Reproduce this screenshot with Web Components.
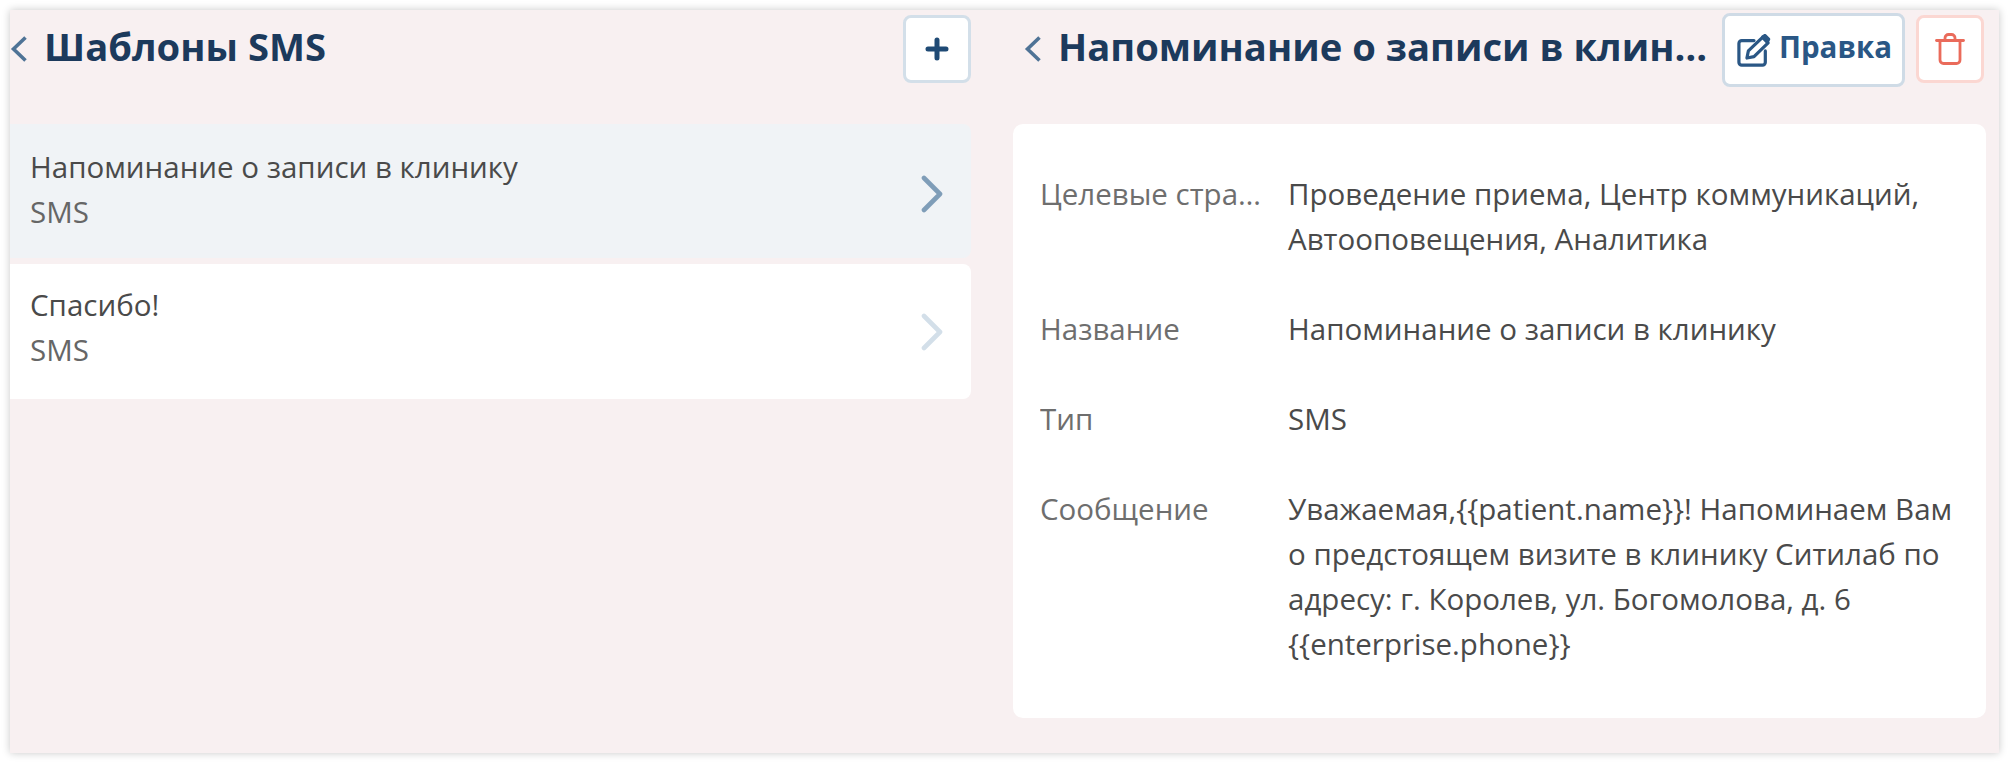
<!doctype html>
<html>
<head>
<meta charset="utf-8">
<title>Шаблоны SMS</title>
<style>
  html, body { margin: 0; height: 100%; background: #fff; }
  body { padding: 10px; box-sizing: border-box; font-family: "Open Sans", "Noto Sans", sans-serif; font-size: 29.5px; line-height: 45px; color: #4a4a4a; }
</style>
</head>
<body>
<sms-templates>
  <sms-column slot="list">
    <sms-header slot="head" text="Шаблоны SMS">
      <sms-button kind="plus"></sms-button>
    </sms-header>
    <sms-item selected title-text="Напоминание о записи в клинику" sub="SMS" style="--pt:20px"></sms-item>
    <sms-item title-text="Спасибо!" sub="SMS" style="--pt:18px;--pb:27px"></sms-item>
  </sms-column>
  <sms-column slot="detail">
    <sms-header slot="head" text="Напоминание о записи в клинику" style="--pl:11px">
      <sms-button kind="edit">Правка</sms-button>
      <sms-button kind="trash"></sms-button>
    </sms-header>
    <sms-card>
      <sms-row label="Целевые страницы">Проведение приема, Центр коммуникаций, Автооповещения, Аналитика</sms-row>
      <sms-row label="Название">Напоминание о записи в клинику</sms-row>
      <sms-row label="Тип">SMS</sms-row>
      <sms-row label="Сообщение">Уважаемая,{{patient.name}}! Напоминаем Вам о предстоящем визите в клинику Ситилаб по адресу: г. Королев, ул. Богомолова, д. 6 {{enterprise.phone}}</sms-row>
    </sms-card>
  </sms-column>
</sms-templates>
<script>
  function define(name, html, extra) {
    customElements.define(name, class extends HTMLElement {
      constructor() {
        super();
        this.attachShadow({mode: 'open'}).innerHTML = html;
      }
      connectedCallback() {
        if (extra) extra(this, this.shadowRoot);
      }
    });
  }

  define('sms-templates', `
    <style>
      :host { display: flex; height: 743px; background: #f8f0f1; box-shadow: 0 0 8px rgba(0,0,0,.22); }
      .l { display: block; width: 961px; flex: none; }
      .r { display: block; flex: 1; min-width: 0; padding: 0 13px 0 42px; }
    </style>
    <div class="l"><slot name="list"></slot></div>
    <div class="r"><slot name="detail"></slot></div>`);

  define('sms-column', `
    <style>
      :host { display: block; }
      .items { display: flex; flex-direction: column; gap: 6px; }
    </style>
    <slot name="head"></slot>
    <div class="items"><slot></slot></div>`);

  define('sms-header', `
    <style>
      :host { display: flex; align-items: flex-start; height: 114px; box-sizing: border-box; padding-left: var(--pl, 0); }
      svg { width: 18px; height: 28px; flex: none; margin: 25px 16px 0 0; }
      h1 { flex: 1; min-width: 0; margin: 0; font-size: 38.2px; line-height: 50px; padding-top: 11px; font-weight: 700; color: #1c3a5c;
           white-space: nowrap; overflow: hidden; text-overflow: ellipsis; }
      .acts { display: flex; align-items: flex-start; gap: 11px; padding-left: 10px; }
    </style>
    <svg viewBox="0 0 18 28" fill="none" stroke="#4f7396" stroke-width="3.6"><path d="M15.5 2.5 3.5 14l12 11.5"/></svg>
    <h1></h1>
    <div class="acts"><slot></slot></div>`,
    (el, root) => { root.querySelector('h1').textContent = el.getAttribute('text'); });

  const icons = {
    plus: '<svg width="24" height="24" viewBox="0 0 24 24" stroke="#1f4a75" stroke-width="5" stroke-linecap="round" fill="none"><path d="M12 3v18M3 12h18"/></svg>',
    edit: '<svg width="34" height="33" viewBox="0 0 36 35" fill="none" stroke="#2a5785" stroke-width="3.4" stroke-linejoin="round" stroke-linecap="round"><path d="M18 7H5a3 3 0 0 0-3 3v20a3 3 0 0 0 3 3h22a3 3 0 0 0 3-3V18"/><path d="M12 18 27 3.5l6 6L18 24l-7.500 1.500z"/><path fill="#2a5785" d="M27.500 3l2-1.500 4 4-1.500 3z"/></svg>',
    trash: '<svg width="30" height="32" viewBox="0 0 30 32" fill="none" stroke="#ea6b5b" stroke-width="2.800" stroke-linejoin="round" stroke-linecap="round"><path d="M1.500 7.500h27"/><path d="M5 7.500V27a3.500 3.500 0 0 0 3.500 3.500h13A3.500 3.500 0 0 0 25 27V7.500"/><path d="M10 7.500V5a3.500 3.500 0 0 1 3.500-3.500h3A3.500 3.500 0 0 1 20 5v2.500"/></svg>'
  };

  define('sms-button', `
    <style>
      :host { display: inline-flex; align-items: center; justify-content: center; gap: 8px; box-sizing: border-box; width: 68px; height: 68px; margin-top: 5px;
              background: #fff; border: 3px solid #d3dfe9; border-radius: 8px; color: #2a5785; font-weight: 700; font-size: 29.5px; line-height: 1; }
      :host([kind=edit]) { width: 183px; height: 74px; margin-top: 3px; padding-left: 2px; border-color: #cfdbe6; }
      :host([kind=trash]) { border-color: #fbd7d2; margin-right: 2px; }
      svg { display: block; }
      span { padding-bottom: 6px; }
    </style>
    <i style="display:contents"></i><span><slot></slot></span>`,
    (el, root) => {
      root.querySelector('i').innerHTML = icons[el.getAttribute('kind')];
      if (el.getAttribute('kind') != 'edit') root.querySelector('span').remove();
    });

  define('sms-item', `
    <style>
      :host { display: flex; align-items: center; background: #fff; border-radius: 0 8px 8px 0; padding: var(--pt, 19px) 28px var(--pb, 24px) 20px; color: #4a4a4a; }
      :host([selected]) { background: #f0f3f6; }
      div { flex: 1; }
      small { display: block; font-size: inherit; color: #666; }
      svg { display: block; margin-top: 10px; stroke: #d3dfe9; }
      :host([selected]) svg { stroke: #7f9db8; }
    </style>
    <div><span></span><small></small></div>
    <svg width="22" height="38" viewBox="0 0 22 38" fill="none" stroke-width="4.600" stroke-linecap="round" stroke-linejoin="round"><path d="M3 3l16 16L3 35"/></svg>`,
    (el, root) => {
      root.querySelector('span').textContent = el.getAttribute('title-text');
      root.querySelector('small').textContent = el.getAttribute('sub');
    });

  define('sms-card', `
    <style>
      :host { display: flex; flex-direction: column; gap: 45px; background: #fff; border-radius: 10px; padding: 47px 26px 52px 27px; }
    </style>
    <slot></slot>`);

  define('sms-row', `
    <style>
      :host { display: flex; gap: 21px; }
      .k { width: 227px; flex: none; color: #6e6e6e; white-space: nowrap; overflow: hidden; text-overflow: ellipsis; }
      .v { flex: 1; min-width: 0; color: #4a4a4a; }
    </style>
    <div class="k"></div><div class="v"><slot></slot></div>`,
    (el, root) => { root.querySelector('.k').textContent = el.getAttribute('label'); });
</script>
</body>
</html>
